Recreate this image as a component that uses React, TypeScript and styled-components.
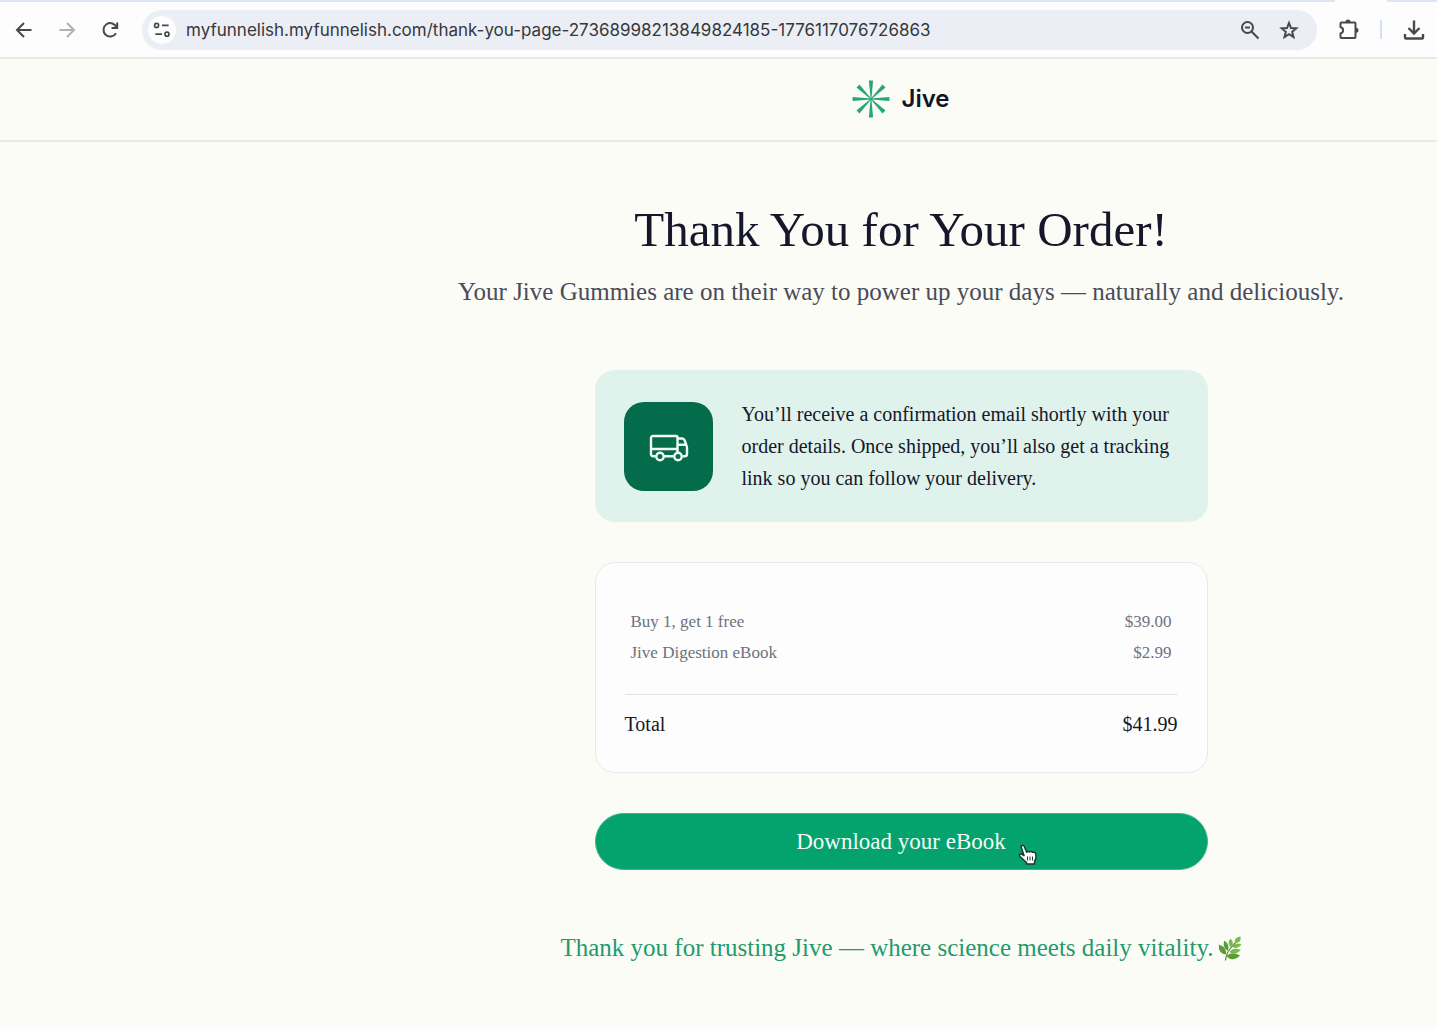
import React from "react";
import styled, { createGlobalStyle } from "styled-components";

const serif = `"Liberation Serif", "Times New Roman", Times, serif`;
const sans = `Inter, "Liberation Sans", Arial, sans-serif`;

const GlobalStyle = createGlobalStyle`
  *, *::before, *::after { box-sizing: border-box; }
  html, body, #root { height: 100%; }
  body { margin: 0; background: #fdfdfd; font-family: ${serif}; overflow: hidden; }
  h1, p { margin: 0; }
`;

const Window = styled.div`
  display: flex;
  flex-direction: column;
  height: 100%;
  padding-bottom: 4px;
`;

const TabStrip = styled.div`
  flex: none;
  height: 2px;
  display: flex;
  justify-content: flex-end;
  background: #dbe5f6;
`;

const ActiveTab = styled.div`
  width: 52px;
  margin-right: 50px;
  background: #fdfdfe;
`;

const Toolbar = styled.nav`
  flex: none;
  display: flex;
  align-items: center;
  height: 57px;
  padding: 0 11px 0 12px;
  gap: 19px;
  background: #fdfdfe;
  border-bottom: 2px solid #e9e9e8;
`;

const IconButton = styled.button<{ $muted?: boolean }>`
  flex: none;
  display: grid;
  place-items: center;
  width: 24px;
  height: 24px;
  padding: 0;
  border: 0;
  background: none;
  color: ${(p) => (p.$muted ? "#b0b1b4" : "#46484c")};
`;

const AddressBar = styled.form`
  flex: 1;
  min-width: 0;
  display: flex;
  align-items: center;
  gap: 15px;
  height: 40px;
  margin-left: 1px;
  padding: 0 16px 0 6px;
  border-radius: 20px;
  background: #ebeef5;
`;

const SiteInfo = styled(IconButton)`
  width: 28px;
  height: 28px;
  border-radius: 50%;
  background: #fdfdfe;
  margin-right: -5px;
`;

const Url = styled.input`
  flex: 1;
  min-width: 0;
  padding: 0;
  border: 0;
  outline: 0;
  background: none;
  color: #35373b;
  font: 400 17px/24px ${sans};
`;

const Actions = styled.div`
  display: flex;
  align-items: center;
  gap: 20px;
`;

const Divider = styled.span`
  width: 2px;
  height: 19px;
  background: #d3e1f7;
`;

const Page = styled.div`
  flex: 1;
  min-height: 0;
  background: #fcfcf7;
`;

const Header = styled.header`
  display: flex;
  align-items: center;
  justify-content: center;
  gap: 11px;
  height: 83px;
  padding: 0 0 2px 365px;
  border-bottom: 2px solid #e9e9e6;
`;

const Brand = styled.span`
  color: #131426;
  font: 600 24px/32px ${sans};
`;

const Main = styled.main`
  display: flex;
  flex-direction: column;
  align-items: center;
  padding: 58px 0 0 365px;
`;

const Title = styled.h1`
  color: #16172a;
  font-size: 49px;
  font-weight: 400;
  line-height: 60px;
`;

const Subtitle = styled.p`
  margin-top: 14px;
  color: #4a4b57;
  font-size: 25px;
  line-height: 36px;
  white-space: nowrap;
`;

const Column = styled.div`
  display: flex;
  flex-direction: column;
  gap: 40px;
  width: 100%;
  max-width: 613px;
  margin-top: 60px;
`;

const Notice = styled.section`
  display: flex;
  align-items: center;
  gap: 29px;
  padding: 28px 29px;
  border-radius: 20px;
  background: #dff2eb;
  color: #16172a;
  font-size: 20px;
  line-height: 32px;
`;

const Tile = styled.div`
  flex: none;
  display: grid;
  place-items: center;
  width: 89px;
  height: 89px;
  padding: 3px 0 0 1px;
  border-radius: 20px;
  background: #046c4b;
`;

const Card = styled.section`
  padding: 43px 29px 32px;
  border: 1px solid #e7e8ea;
  border-radius: 20px;
  background: #fdfdfd;
`;

const Items = styled.table`
  width: 100%;
  border-collapse: collapse;
  color: #6c727e;
  font-size: 17px;

  th, td { padding: 0 6px; height: 31px; line-height: 31px; font-weight: 400; text-align: left; }
  td { text-align: right; }
  tbody::after { content: ""; display: block; height: 26px; }
  tfoot { border-top: 1px solid #e2e3e6; color: #16172a; font-size: 20px; }
  tfoot th, tfoot td { padding: 14px 0 0; height: 45px; }
`;

const Download = styled.button`
  position: relative;
  height: 57px;
  padding: 0;
  border: 1px solid #3fb48b;
  border-radius: 29px;
  background: #04a26c;
  color: #f5fcf8;
  font: 400 23px/32px ${serif};
  cursor: pointer;
`;

const Pointer = styled.svg`
  position: absolute;
  left: calc(50% + 117px);
  top: 30px;
`;

const Closing = styled.p`
  display: flex;
  align-items: center;
  gap: 4px;
  margin-top: 60px;
  color: #229a6d;
  font-size: 25px;
  line-height: 36px;
  white-space: nowrap;
`;

const Icon = ({ size = 24, width = 2, children }: { size?: number; width?: number; children: React.ReactNode }) => (
  <svg width={size} height={size} viewBox="0 0 24 24" fill="none" stroke="currentColor" strokeWidth={width} aria-hidden="true">
    {children}
  </svg>
);

const Burst = () => (
  <svg width="38" height="38" viewBox="-19 -19 38 38" fill="#26a575" aria-hidden="true">
    {[0, 45, 90, 135, 180, 225, 270, 315].map((angle) => (
      <path key={angle} d="M-.4 0L-2.100-18.400H2.100L.4 0Z" transform={`rotate(${angle})`} />
    ))}
  </svg>
);

const Truck = () => (
  <svg width="40" height="28" viewBox="0 0 40 28" fill="none" stroke="#f2faf6" strokeWidth="2.4" strokeLinejoin="round" aria-hidden="true">
    <path d="M6.500 22.300H4a2 2 0 0 1-2-2V4a2 2 0 0 1 2-2h23a1.500 1.500 0 0 1 1.500 1.500V19" />
    <path d="M2 15h26.500M14.500 22.300h10M28.500 4.500h4.500q2 0 2.700 2l1.600 4.500q.7 1.500.7 3v6q0 2.300-2.300 2.300h-2.200M28.500 10.800h8.500" />
    <circle cx="11" cy="22.500" r="3.700" />
    <circle cx="29" cy="22.500" r="3.700" />
  </svg>
);

const Sprig = () => (
  <svg width="24" height="25" viewBox="0 0 24 25" aria-hidden="true">
    <path d="M7.500 24.500Q8 18 12 13T19 5" fill="none" stroke="#568b35" strokeWidth="1.200" />
    <g fill="#5b9c38">
      <path d="M8 18.500Q0 17.500 .8 8.500Q9 10.500 8 18.500Z" />
      <path d="M9.800 15Q3.500 10.500 6.500 4.500Q12.500 9 9.800 15Z" />
      <path d="M8.500 20.500Q13 14.500 22 19.500Q15 26.500 8.500 20.500Z" />
    </g>
    <g fill="#79b94d">
      <path d="M13 11.500Q8.500 7 12.500 2.500Q17 7 13 11.500Z" />
      <path d="M11.500 16Q15 10.500 23 14Q17 20 11.500 16Z" />
      <path d="M14.500 10.800Q18 5.800 23.500 8.500Q19.500 14 14.500 10.800Z" />
      <path d="M17 7Q15.500 1.500 22.500.5Q24 6.500 17 7Z" />
    </g>
  </svg>
);

const items = [
  { name: "Buy 1, get 1 free", price: "$39.00" },
  { name: "Jive Digestion eBook", price: "$2.99" },
];

export default function App() {
  return (
    <Window>
      <GlobalStyle />
      <TabStrip><ActiveTab /></TabStrip>
      <Toolbar aria-label="Browser toolbar">
        <IconButton aria-label="Back"><Icon><path d="M19.500 12H5.500M12 5l-7 7 7 7" /></Icon></IconButton>
        <IconButton aria-label="Forward" $muted><Icon><path d="M4.500 12h14M12 5l7 7-7 7" /></Icon></IconButton>
        <IconButton aria-label="Reload">
          <Icon><path d="M18 15.200A6.700 6.700 0 1 1 18.500 9.500M19.200 4.500v5.500h-5.700" /></Icon>
        </IconButton>
        <AddressBar onSubmit={(e) => e.preventDefault()}>
          <SiteInfo type="button" aria-label="Site information">
            <Icon size={20}>
              <circle cx="5.500" cy="6.500" r="2.400" /><path d="M12 6.500h8M4 17h8" /><circle cx="18" cy="17" r="2.400" />
            </Icon>
          </SiteInfo>
          <Url aria-label="Address" defaultValue="myfunnelish.myfunnelish.com/thank-you-page-27368998213849824185-1776117076726863" />
          <IconButton type="button" aria-label="Zoom">
            <Icon><circle cx="9.500" cy="9.500" r="5.500" /><path d="M13.500 13.500l7 7M7 9.500h5" /></Icon>
          </IconButton>
          <IconButton type="button" aria-label="Bookmark">
            <Icon><path d="M12 5l2 5 5.300.4-4.100 3.400 1.300 5.200-4.500-2.800L7.500 19l1.300-5.200-4.100-3.400L10 10z" /></Icon>
          </IconButton>
        </AddressBar>
        <Actions>
          <IconButton aria-label="Extensions">
            <Icon>
              <path d="M5.500 4.500h13a1 1 0 0 1 1 1V19a1 1 0 0 1-1 1h-13a1 1 0 0 1-1-1v-3.500q2.600-.7 2.600-3.200T4.500 9V5.500a1 1 0 0 1 1-1Z" />
              <path d="M9.500 4a2.500 2.500 0 0 1 5 0zM20 9.800a2.500 2.500 0 0 1 0 5z" fill="currentColor" stroke="none" />
            </Icon>
          </IconButton>
          <Divider />
          <IconButton aria-label="Downloads">
            <Icon width={2.4}><path d="M12 2.500v12.500M6.500 10l5.500 5.500 5.500-5.500M3 16v3.500a1 1 0 0 0 1 1h16a1 1 0 0 0 1-1V16" /></Icon>
          </IconButton>
        </Actions>
      </Toolbar>
      <Page>
        <Header><Burst /><Brand>Jive</Brand></Header>
        <Main>
          <Title>Thank You for Your Order!</Title>
          <Subtitle>Your Jive Gummies are on their way to power up your days — naturally and deliciously.</Subtitle>
          <Column>
            <Notice>
              <Tile><Truck /></Tile>
              <p>You’ll receive a confirmation email shortly with your order details. Once shipped, you’ll also get a tracking link so you can follow your delivery.</p>
            </Notice>
            <Card>
              <Items>
                <tbody>
                  {items.map((item) => (
                    <tr key={item.name}><th scope="row">{item.name}</th><td>{item.price}</td></tr>
                  ))}
                </tbody>
                <tfoot><tr><th scope="row">Total</th><td>$41.99</td></tr></tfoot>
              </Items>
            </Card>
            <Download>
              Download your eBook
              <Pointer width="20" height="22" viewBox="0 0 20 22" aria-hidden="true">
                <path d="M3 2.500Q5-.3 6.500 3L8.700 8.200Q10 6.800 11.500 8Q13 6.800 14.500 8.300Q17.800 7.500 18 11.500Q18.500 15 16.500 17.500V20H8.500V18.500L2 12.500Q.5 9.800 3.500 10L6 11.500Z" fill="#fff" stroke="#20352d" strokeWidth="1.500" strokeLinejoin="round" />
                <path d="M9.500 12.500v4M12 12.500v4M14.500 12.500v4" stroke="#20352d" />
              </Pointer>
            </Download>
          </Column>
          <Closing>Thank you for trusting Jive — where science meets daily vitality. <Sprig /></Closing>
        </Main>
      </Page>
    </Window>
  );
}
